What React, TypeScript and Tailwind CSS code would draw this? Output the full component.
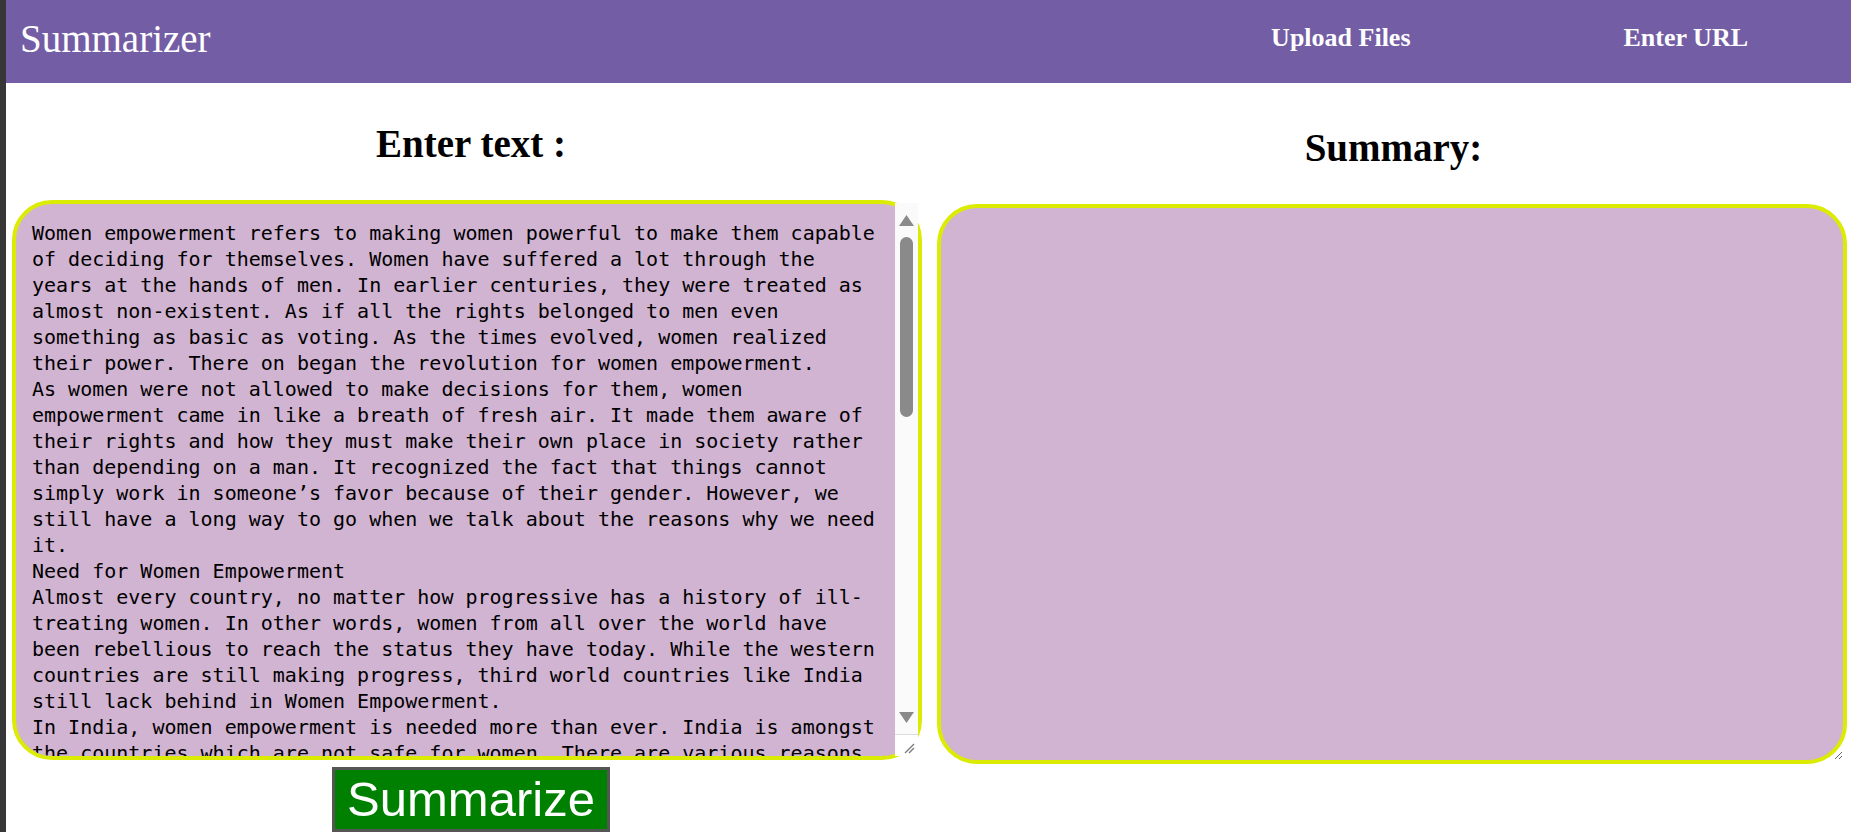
import React from 'react';

const SAMPLE_TEXT =
  'Women empowerment refers to making women powerful to make them capable of deciding for themselves. Women have suffered a lot through the years at the hands of men. In earlier centuries, they were treated as almost non-existent. As if all the rights belonged to men even something as basic as voting. As the times evolved, women realized their power. There on began the revolution for women empowerment.\n' +
  'As women were not allowed to make decisions for them, women empowerment came in like a breath of fresh air. It made them aware of their rights and how they must make their own place in society rather than depending on a man. It recognized the fact that things cannot simply work in someone\u2019s favor because of their gender. However, we still have a long way to go when we talk about the reasons why we need it.\n' +
  'Need for Women Empowerment\n' +
  'Almost every country, no matter how progressive has a history of ill-treating women. In other words, women from all over the world have been rebellious to reach the status they have today. While the western countries are still making progress, third world countries like India still lack behind in Women Empowerment.\n' +
  'In India, women empowerment is needed more than ever. India is amongst the countries which are not safe for women. There are various reasons for this.';

const Arrow: React.FC<{ up?: boolean }> = ({ up }) => (
  <svg width="15" height="11" viewBox="0 0 15 11">
    {up ? (
      <polygon points="7.5,0 15,11 0,11" fill="#8a8a8a" />
    ) : (
      <polygon points="0,0 15,0 7.5,11" fill="#8a8a8a" />
    )}
  </svg>
);

const FakeScrollbar: React.FC = () => (
  <div className="absolute top-[3px] right-[4px] bottom-[4px] w-[23px] bg-[#fafafa] flex flex-col items-center">
    <div className="pt-[12px]">
      <Arrow up />
    </div>
    <div className="mt-[11px] w-[13px] h-[180px] rounded-full bg-[#8a8a8a]" />
    <div className="flex-1" />
    <div className="mb-[11px]">
      <Arrow />
    </div>
    <div className="w-full h-[22px] border-t border-[#dcdcdc] bg-white flex items-end justify-end pr-[3px] pb-[2px]">
      <svg width="11" height="11" viewBox="0 0 11 11">
        <line x1="1" y1="10" x2="10" y2="1" stroke="#777" strokeWidth="1.2" />
        <line x1="5" y1="10" x2="10" y2="5" stroke="#777" strokeWidth="1.2" />
      </svg>
    </div>
  </div>
);

const App: React.FC = () => {
  return (
    <div className="flex h-[832px] overflow-hidden bg-white">
      <div className="w-[6px] shrink-0 bg-[#373737]" />

      <div className="flex-1 flex flex-col">
        {/* Top bar */}
        <header className="h-[83px] shrink-0 flex items-start bg-[#735da5] text-white font-['Liberation_Serif',serif]">
          <div className="pl-[14px] mt-[17px] text-[39px] leading-[44px]">Summarizer</div>
          <nav className="ml-auto flex gap-[213px] pr-[103px] mt-[23px] text-[26px] leading-[29px] font-bold">
            <a href="#upload">Upload Files</a>
            <a href="#url">Enter URL</a>
          </nav>
        </header>

        <div className="flex">
          {/* Input column */}
          <div className="w-[930px] shrink-0 flex flex-col">
            <h2 className="pt-[38px] text-center text-[39px] leading-[45px] font-bold text-black font-['Liberation_Serif',serif]">
              Enter text :
            </h2>
            <div className="relative ml-[6px] mt-[34px] w-[910px] h-[560px]">
              <textarea
                readOnly
                defaultValue={SAMPLE_TEXT}
                className="block w-full h-full resize-none overflow-hidden rounded-[40px] border-4 border-[#dbeb04] bg-[#d1b3d2] pl-[16px] pt-[16px] pr-[41px] pb-[16px] text-[20px] leading-[26px] text-black outline-none font-['DejaVu_Sans_Mono',monospace]"
              />
              <FakeScrollbar />
            </div>
            <button className="self-center mt-[7px] bg-[#008000] border-[3px] border-[#555] text-white text-[49px] leading-[55px] px-[12px] py-[2px] font-['Liberation_Sans',Arial,sans-serif]">
              Summarize
            </button>
          </div>

          {/* Summary column */}
          <div className="flex-1 flex flex-col">
            <h2 className="pt-[42px] text-center text-[39px] leading-[45px] font-bold text-black font-['Liberation_Serif',serif]">
              Summary:
            </h2>
            <textarea
              readOnly
              className="block ml-[1px] mt-[34px] w-[910px] h-[560px] resize rounded-[40px] border-4 border-[#dbeb04] bg-[#d1b3d2] p-[16px] text-[20px] leading-[26px] text-black outline-none font-['DejaVu_Sans_Mono',monospace]"
            />
          </div>
        </div>
      </div>
    </div>
  );
};

export default App;
